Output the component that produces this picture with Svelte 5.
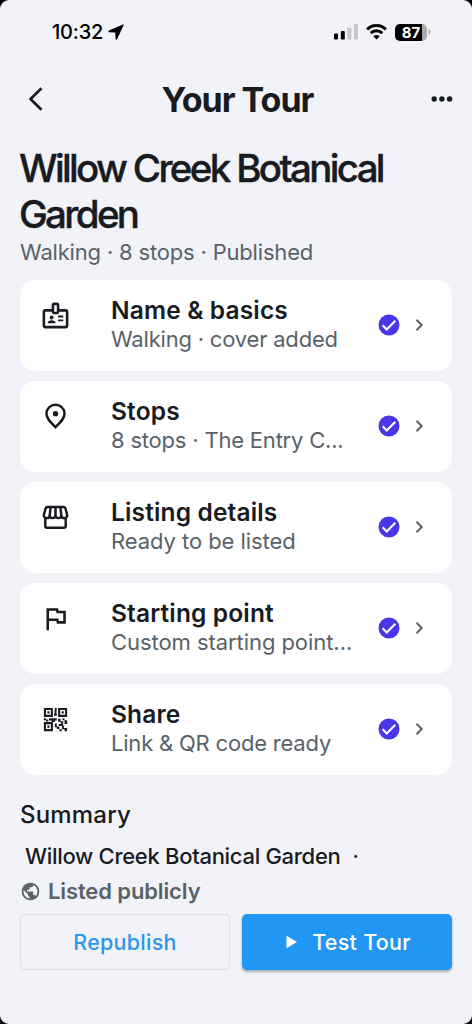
<script lang="ts">
	type Step = { icon: string; title: string; detail: string };

	const steps: Step[] = [
		{ icon: 'badge', title: 'Name & basics', detail: 'Walking · cover added' },
		{ icon: 'pin', title: 'Stops', detail: '8 stops · The Entry C...' },
		{ icon: 'store', title: 'Listing details', detail: 'Ready to be listed' },
		{ icon: 'flag', title: 'Starting point', detail: 'Custom starting point...' },
		{ icon: 'qr', title: 'Share', detail: 'Link & QR code ready' }
	];
</script>

<div class="screen">
	<div class="status-bar">
		<div class="clock">
			<span class="time">10:32</span>
			<svg width="16" height="16" viewBox="0 0 16 16">
				<path d="M14.9.4.9 6.500c-1 .5-.8 1.600.3 1.700l6 .4.4 6.200c.1 1.100 1.200 1.200 1.600.2L15.600 1.200c.2-.6-.1-1-.7-.8z" />
			</svg>
		</div>
		<div class="indicators">
			<svg width="25" height="16" viewBox="0 0 25 16">
				<rect x="0" y="9.5" width="4" height="6" rx="1" />
				<rect x="6.8" y="7" width="4" height="8.5" rx="1" />
				<rect x="13.3" y="3.5" width="4" height="12" rx="1" fill="#c5c6c9" />
				<rect x="19.9" y="0" width="4" height="15.5" rx="1" fill="#c5c6c9" />
			</svg>
			<svg class="wifi" width="21" height="16" viewBox="0 0 21 16">
				<path d="M1.1 5.4a13.3 13.3 0 0 1 18.8 0M4.700 9.1a8.4 8.4 0 0 1 11.600 0" fill="none" stroke="#000" stroke-width="2.900" />
				<path d="M10.500 15.500 7.300 12.300a4.600 4.600 0 0 1 6.400 0z" />
			</svg>
			<div class="battery"><span>87</span></div>
			<svg class="cap" width="3" height="6" viewBox="0 0 3 6"><path d="M.5 0a3.2 3.2 0 0 1 0 6z" fill="#aaabad" /></svg>
		</div>
	</div>

	<header>
		<svg width="16" height="26" viewBox="0 0 16 26">
			<path d="M13.5 2.2 2.5 13l11 10.8" fill="none" stroke="#181b1f" stroke-width="2.7" stroke-linejoin="round" />
		</svg>
		<h1>Your Tour</h1>
		<svg width="22" height="6" viewBox="0 0 22 6" fill="#181b1f">
			<circle cx="3.2" cy="3" r="2.7" />
			<circle cx="10.9" cy="3" r="2.7" />
			<circle cx="18.6" cy="3" r="2.7" />
		</svg>
	</header>

	<main>
		<h2>Willow Creek Botanical Garden</h2>
		<p class="meta">Walking · 8 stops · Published</p>

		<div class="steps">
			{#each steps as step}
				<div class="step">
					<svg class="step-icon" width="31" height="31" viewBox="0 0 24 24">
						{#if step.icon === 'badge'}
							<path d="M20 7h-5V4c0-1.100-.9-2-2-2h-2c-1.100 0-2 .9-2 2v3H4c-1.100 0-2 .9-2 2v11c0 1.100.9 2 2 2h16c1.100 0 2-.9 2-2V9c0-1.100-.9-2-2-2zm-9-3h2v5h-2V4zm9 16H4V9h5c0 1.100.9 2 2 2h2c1.100 0 2-.9 2-2h5v11z" />
							<circle cx="9" cy="13.500" r="1.500" />
							<path d="M11.080 16.180C10.440 15.900 9.740 15.750 9 15.750s-1.440.15-2.080.43C6.360 16.420 6 16.960 6 17.570V18h6v-.43c0-.61-.36-1.150-.92-1.390zM14 12h4v1.500h-4zM14 15h4v1.500h-4z" />
						{:else if step.icon === 'pin'}
							<path d="M12 2.900c-3.900 0-7 3-7 6.800 0 3.600 2.500 6.300 7 10.600 4.500-4.300 7-7 7-10.600 0-3.800-3.100-6.800-7-6.800z" class="outline" />
							<circle cx="12" cy="9.800" r="2.100" />
						{:else if step.icon === 'store'}
							<path d="M6 3.800h12c1 0 1.500.4 1.700 1.200l1.200 4.500c.5 1.800-.6 3-2.100 3-1.300 0-2.200-1-2.300-2.200 0 1.300-1 2.200-2.200 2.200-1.300 0-2.300-1-2.300-2.200 0 1.200-1 2.200-2.300 2.200-1.200 0-2.200-.9-2.200-2.200-.1 1.200-1 2.200-2.300 2.200-1.500 0-2.600-1.200-2.100-3L4.300 5c.2-.8.700-1.200 1.700-1.200zM8.200 4l-.7 6.300M12 4v6.300M15.800 4l.7 6.300M4.100 12v6.500c0 .9.5 1.400 1.400 1.400h13c.9 0 1.400-.5 1.400-1.400V12" class="outline" />
						{:else if step.icon === 'flag'}
							<path d="m12.360 6 .4 2H18v6h-3.360l-.4-2H7V6h5.360M14 4H5v17h2v-7h5.600l.4 2h7V6h-5.600L14 4z" />
						{:else}
							<path fill-rule="evenodd" d="M3 3h7v7H3zM4.600 4.600v3.800h3.800V4.600zM14 3h7v7h-7zM15.600 4.600v3.800h3.800V4.600zM3 14h7v7H3zM4.600 15.600v3.800h3.800v-3.800z" />
							<path d="M5.700 5.700h1.700v1.700H5.700zM16.700 5.700h1.700v1.700h-1.700zM5.700 16.700h1.700v1.700H5.700zM11.500 3H13v1.500h-1.500zM11.300 4.500h1.500V9h-1.500zM10.800 7.500H13V9h-2.200zM3 11h1.700v1.500H3zM4.700 12h1.800v1.500H4.700zM7 11h6v1.700h-1.500v1.300H9v-1.300H7zM14 11.500h2v1.800h2v2h-2v-1.500h-2zM17.500 11H19v1.500h-1.500zM19 12.500h2v3h-2zM11.500 15H13v3h-1.500zM13 17.500h2v1.800h-2zM14.500 15.500H18V17h-3.500zM17 17h1.500v1.500H21V21h-2v-1.500h-2zM15 19.500h1.800V21H15z" />
						{/if}
					</svg>
					<div class="step-text">
						<p class="step-title">{step.title}</p>
						<p class="step-detail {step.icon}">{step.detail}</p>
					</div>
					<svg class="check" width="22" height="22" viewBox="0 0 22 22">
						<circle cx="11" cy="11" r="10.500" fill="#4936e8" />
						<path d="m4.600 11.300 4.100 4.100 8.600-8.700" fill="none" stroke="#fff" stroke-width="2.100" />
					</svg>
					<svg width="9" height="14" viewBox="0 0 9 14">
						<path d="m1.500 1.800 5.200 5.200-5.200 5.200" fill="none" stroke="#596269" stroke-width="2" />
					</svg>
				</div>
			{/each}
		</div>

		<h3>Summary</h3>
		<p class="tour-name"><span>Willow Creek Botanical Garden</span><i>·</i></p>
		<p class="visibility">
			<svg width="21" height="21" viewBox="0 0 24 24">
				<path d="M12 2C6.480 2 2 6.480 2 12s4.480 10 10 10 10-4.480 10-10S17.520 2 12 2zm-1 17.930c-3.950-.49-7-3.850-7-7.930 0-.62.080-1.210.21-1.790L9 15v1c0 1.100.9 2 2 2v1.930zm6.900-2.540c-.26-.81-1-1.390-1.900-1.390h-1v-3c0-.55-.45-1-1-1H8v-2h2c.55 0 1-.45 1-1V7h2c1.100 0 2-.9 2-2v-.41c2.930 1.190 5 4.060 5 7.410 0 2.080-.8 3.970-2.100 5.390z" />
			</svg>
			<span>Listed publicly</span>
		</p>

		<div class="actions">
			<button class="republish">Republish</button>
			<button class="test">
				<svg width="12" height="14" viewBox="0 0 12 14"><path d="M.5.7v12.600L11 7z" fill="#fff" /></svg>
				<span>Test Tour</span>
			</button>
		</div>
	</main>
</div>

<style>
	:global(body) {
		background: #000;
	}

	.screen {
		width: 472px;
		height: 1024px;
		box-sizing: border-box;
		overflow: hidden;
		border-radius: 9px;
		background: #f2f3f8;
		color: #181b1f;
		font-family: Inter, sans-serif;
		white-space: nowrap;
	}

	h1,
	h2,
	h3,
	p {
		margin: 0;
	}

	svg {
		display: block;
		flex: none;
	}

	.status-bar {
		display: flex;
		justify-content: space-between;
		align-items: center;
		height: 64px;
		padding: 0 41px 0 52px;
	}

	.clock {
		display: flex;
		align-items: center;
		gap: 5px;
	}

	.time {
		color: #000;
		font-size: 20px;
		font-weight: 500;
		letter-spacing: -0.2px;
	}

	.indicators {
		display: flex;
		align-items: center;
	}

	.wifi {
		margin: 0 8px 0 7px;
	}

	.battery {
		width: 32px;
		height: 17px;
		border-radius: 5px;
		background: linear-gradient(90deg, #000 27px, #aaabad 27px);
		color: #fff;
		font-size: 15px;
		font-weight: 700;
		line-height: 17px;
		text-align: center;
	}

	.cap {
		margin-left: 1px;
	}

	header {
		display: flex;
		justify-content: space-between;
		align-items: center;
		height: 70px;
		padding: 0 19px 0 28px;
	}

	h1 {
		font-size: 34px;
		font-weight: 700;
		letter-spacing: -1px;
	}

	main {
		padding: 12px 20px 0;
	}

	h2 {
		margin-left: -1px;
		font-size: 38.5px;
		font-weight: 500;
		line-height: 45.5px;
		letter-spacing: -2.67px;
		white-space: normal;
		-webkit-text-stroke: 0.4px #181b1f;
	}

	.meta {
		color: #596269;
		font-size: 22px;
		line-height: 30px;
		letter-spacing: -0.18px;
	}

	.steps {
		display: flex;
		flex-direction: column;
		gap: 10px;
		margin-top: 13px;
	}

	.step {
		display: flex;
		align-items: center;
		height: 91px;
		box-sizing: border-box;
		padding: 0 28px 2px 20px;
		border-radius: 15px;
		background: #fff;
	}

	.step-icon {
		align-self: flex-start;
		margin: 20px 40px 0 0;
		fill: #181b1f;
	}

	.outline {
		fill: none;
		stroke: #181b1f;
		stroke-width: 1.9;
	}

	.step-text {
		flex: 1;
	}

	.step-title {
		font-size: 24.5px;
		font-weight: 600;
		line-height: 29px;
		letter-spacing: 0.15px;
	}

	.step-detail {
		color: #596269;
		font-size: 22px;
		line-height: 29px;
		letter-spacing: -0.06px;
	}

	.step-detail.badge,
	.step-detail.pin,
	.step-detail.qr {
		letter-spacing: -0.2px;
	}

	.check {
		margin-right: 15px;
	}

	h3 {
		margin-top: 25px;
		font-size: 24px;
		font-weight: 500;
		line-height: 30px;
		letter-spacing: 0.2px;
	}

	.tour-name {
		margin-top: 12px;
		padding-left: 5px;
		font-size: 22px;
		font-weight: 500;
		line-height: 28px;
		letter-spacing: -0.3px;
	}

	.tour-name i {
		margin-left: 12px;
		font-style: normal;
		font-weight: 400;
	}

	.visibility {
		display: flex;
		align-items: center;
		gap: 7px;
		margin-top: 7px;
		color: #596269;
		font-size: 22px;
		font-weight: 600;
		line-height: 28px;
		letter-spacing: -0.12px;
	}

	.visibility svg {
		fill: #596269;
	}

	.actions {
		display: grid;
		grid-template-columns: 1fr 1fr;
		gap: 12px;
		margin-top: 9px;
	}

	button {
		display: flex;
		justify-content: center;
		align-items: center;
		height: 56px;
		padding: 0;
		border: 0;
		border-radius: 5px;
		font-family: inherit;
		font-size: 21.5px;
		font-weight: 500;
		letter-spacing: 0.25px;
	}

	.republish {
		border: 1.5px solid #dcdee3;
		background: transparent;
		color: #2c95ee;
	}

	.test {
		gap: 14px;
		padding-left: 3px;
		background: #2196f3;
		box-shadow: 0 2px 3px rgba(0, 0, 0, 0.3);
		color: #fff;
	}
</style>
